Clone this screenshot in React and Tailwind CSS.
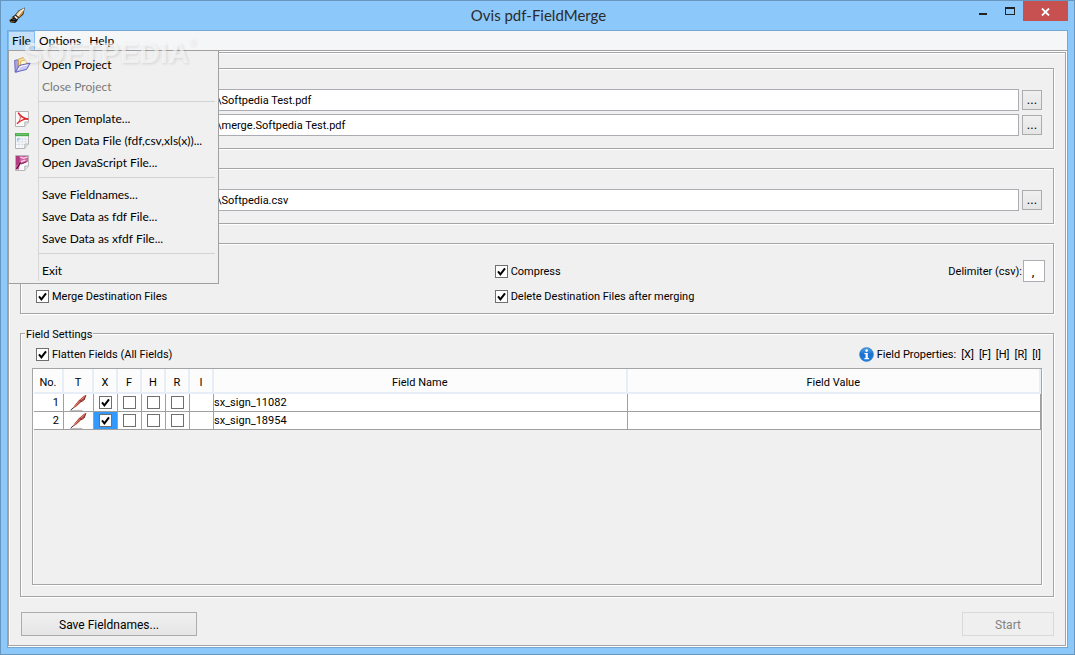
import React from "react";

const ETCHED =
  "border border-[#a5a5a7] shadow-[1px_1px_0_#fff,inset_1px_1px_0_#fff]";

function PenNibIcon() {
  return (
    <svg width="17" height="17" viewBox="0 0 17 17" aria-hidden="true">
      <path d="M16 0.5 L9.5 3.5 L6 8 L10 11.4 L14.4 7.5 Z" fill="#3a2a1c" />
      <path d="M15.6 1 L10 4 L6.8 8 L9 9.8 Z" fill="#f0d3a2" />
      <path d="M15.6 1 L9 9.8 L10 10.8 L13.8 6.8 Z" fill="#c98d40" />
      <path d="M15 1.8 L9 8.6" stroke="#fff6e2" strokeWidth="1.1" />
      <path d="M6.8 7.6 L3.6 9.6 L1.6 12.4 L5.4 12.2 L7.4 15 L9.8 11 Z" fill="#16120f" />
      <path d="M6.2 8.6 L9 11 L7.8 12.2 L5.2 10 Z" fill="#f6f0e2" />
      <path d="M0.8 12.6 C2 11.6 3.4 12 4.6 12.4 C7 12.6 8 14.4 6.8 15.4 C5 16.6 2 16 1.2 15 C0.6 14.2 0.4 13.2 0.8 12.6 Z" fill="#0f0d0c" />
      <path d="M1.6 14.2 C2.6 15.2 4.2 15.2 5.4 14.6" stroke="#c99a52" strokeWidth="0.9" fill="none" />
      <path d="M1.2 12.2 L4.4 10.4" stroke="#d9b16e" strokeWidth="0.8" />
    </svg>
  );
}

function FolderIcon() {
  return (
    <svg width="17" height="16" viewBox="0 0 17 16" aria-hidden="true">
      <path d="M0.6 3.5 L3.2 2.8 L4.6 4 L4 14.6 L1.2 15 Z" fill="#a8a4e6" stroke="#5c58b8" strokeWidth="0.8" />
      <path d="M4.4 2.2 L9 0.6 L11.4 2.4 L11.6 8.6 L4.6 10.4 Z" fill="#f9e39b" stroke="#c99b3e" strokeWidth="0.8" />
      <path d="M6.6 4.4 L11 3 L12.8 4.6 L12.8 8.8 L6.6 10 Z" fill="#fff7d6" stroke="#d2a94e" strokeWidth="0.8" />
      <path d="M1.4 15.2 L5.4 8.4 L16.2 6 L12.6 12.4 Z" fill="#c9c9f7" stroke="#5c58b8" strokeWidth="0.9" />
      <path d="M4 12.8 L6.2 9.6 L13.6 8" stroke="#fff" strokeWidth="0.9" fill="none" />
    </svg>
  );
}

function PageShape() {
  return (
    <>
      <path d="M1.5 0.5 H14.5 V11 L10.8 15.5 H1.5 Z" fill="#fbfbfb" stroke="#b4b4b4" />
      <path d="M14.5 11 H10.8 V15.5" fill="#e4e4e4" stroke="#b4b4b4" />
    </>
  );
}

function PdfIcon() {
  return (
    <svg width="16" height="16" viewBox="0 0 16 16" aria-hidden="true">
      <PageShape />
      <path d="M4.2 1.6 C5.6 4.6 9 7 14.2 8.4" fill="none" stroke="#dd2229" strokeWidth="1.5" />
      <path d="M14.2 7.6 C9.6 8 5.8 9.8 3 12.8" fill="none" stroke="#dd2229" strokeWidth="1.3" />
      <path d="M5.6 3.6 C7 6.6 6.2 9.4 3.4 12.4" fill="none" stroke="#e5484d" strokeWidth="1" />
    </svg>
  );
}

function SheetIcon() {
  return (
    <svg width="16" height="16" viewBox="0 0 16 16" aria-hidden="true">
      <PageShape />
      <rect x="1" y="0" width="14" height="3.2" fill="#4aab4a" />
      <path d="M2 1.2 H14" stroke="#8fd48b" strokeWidth="0.8" />
      <path d="M2 6.2 H14 M2 8.8 H14 M2 11.4 H10.5 M5 4 V15 M8.2 4 V15 M11.4 4 V10.5" stroke="#d3dbe6" strokeWidth="0.7" />
      <path d="M3 5 H7 L3 9 Z" fill="#9fd0f2" />
    </svg>
  );
}

function ScriptIcon() {
  return (
    <svg width="16" height="16" viewBox="0 0 16 16" aria-hidden="true">
      <PageShape />
      <path d="M2 1 H14 V6.6 C12 8 10.6 8.2 9.4 8.4 L5.6 9.6 L5 14.6 H2 Z" fill="#cf62a0" />
      <path d="M2 1 H5.4 L6 5 L4.6 9 L2 10.4 Z" fill="#b23a80" />
      <path d="M6.4 2 L9.4 3.4 L13.6 2 M7 6.6 L11.6 5" stroke="#fbdcee" strokeWidth="1.3" fill="none" />
      <path d="M2.4 14 L5 10.2 L6.4 7.4" stroke="#5d103c" strokeWidth="1.3" fill="none" />
      <path d="M7 9 L12.6 6.8" stroke="#7d1c54" strokeWidth="0.9" />
    </svg>
  );
}

function InfoIcon() {
  return (
    <svg width="15" height="15" viewBox="0 0 15 15" aria-hidden="true">
      <defs>
        <linearGradient id="info" x1="0" y1="0" x2="0" y2="1">
          <stop offset="0" stopColor="#4fa5ea" />
          <stop offset="0.5" stopColor="#1a6fd0" />
          <stop offset="1" stopColor="#1c87e4" />
        </linearGradient>
      </defs>
      <circle cx="7.5" cy="7.5" r="6.9" fill="url(#info)" stroke="#2a6fbb" strokeWidth="0.6" />
      <circle cx="7.6" cy="3.6" r="1.3" fill="#fff" />
      <path d="M5.4 6 H8.8 V11 H10 V12.2 H5.4 V11 H6.6 V7.2 H5.4 Z" fill="#fff" />
    </svg>
  );
}

function SignatureIcon() {
  return (
    <svg width="17" height="16" viewBox="0 0 17 16" className="mx-auto block" aria-label="Signature">
      <path d="M16.4 0 L14 0.8 L8.6 5.4 L4.4 10.4 L2.4 14 L6.4 11.6 L10.6 7.6 L13.6 6 L15.2 2.6 Z" fill="#b5483d" />
      <path d="M15.6 0.8 L9 6.6 L3.8 12.6" stroke="#dd8a76" strokeWidth="0.9" fill="none" />
      <path d="M15.8 0.4 L14.2 5 M9.4 5.4 L12 6.6" stroke="#6f2a26" strokeWidth="0.9" />
      <path d="M3.4 12.6 L0.6 15.2" stroke="#3b2a28" strokeWidth="1" />
      <path d="M0.6 15.4 H12.4" stroke="#a8a29e" strokeWidth="0.8" />
    </svg>
  );
}

function Tick({ label, defaultChecked = false }) {
  return (
    <span className="relative inline-block size-[13px] shrink-0">
      <input
        type="checkbox"
        aria-label={label}
        defaultChecked={defaultChecked}
        className="peer block size-[13px] appearance-none border border-[#6f6f6f] bg-white"
      />
      <svg
        viewBox="0 0 13 13"
        className="pointer-events-none absolute inset-0 hidden size-[13px] peer-checked:block"
        aria-hidden="true"
      >
        <path d="M3 6.4 L5.4 9.4 L10 3.4" fill="none" stroke="#000" strokeWidth="2" />
      </svg>
    </span>
  );
}

function Check({ children }) {
  return (
    <label className="flex items-center gap-[3px] whitespace-nowrap">
      <Tick defaultChecked />
      <span className="pt-[2px] leading-[14px]">{children}</span>
    </label>
  );
}

function FileRow({ label, value }) {
  return (
    <div className="flex items-center gap-[3px]">
      <input
        type="text"
        aria-label={label}
        defaultValue={value}
        className="h-[22px] min-w-0 flex-1 border border-[#abadb3] bg-white"
      />
      <button
        type="button"
        aria-label={"Browse " + label}
        className="flex size-5 items-center justify-center border border-[#acacac] bg-linear-to-b from-[#f0f0f0] to-[#e5e5e5] text-[13px] leading-4"
      >
        ...
      </button>
    </div>
  );
}

const menuGroups = [
  [
    { text: "Open Project", icon: <FolderIcon /> },
    { text: "Close Project", disabled: true },
  ],
  [
    { text: "Open Template...", icon: <PdfIcon /> },
    { text: "Open Data File (fdf,csv,xls(x))...", icon: <SheetIcon /> },
    { text: "Open JavaScript File...", icon: <ScriptIcon /> },
  ],
  [
    { text: "Save Fieldnames..." },
    { text: "Save Data as fdf File..." },
    { text: "Save Data as xfdf File..." },
  ],
  [{ text: "Exit" }],
];

function FileMenu() {
  return (
    <div
      role="menu"
      aria-label="File"
      className="absolute top-[19px] left-0 z-10 w-[211px] border border-[#a0a0a0] bg-[#f0f0f0] pt-[3px] pb-px"
    >
      <div className="absolute top-[2px] bottom-[2px] left-[29px] w-px bg-[#d7d7d7]" />
      {menuGroups.map((group, i) => (
        <div key={group[0].text} role="group">
          {i > 0 && (
            <div className="h-[10px] pt-[3px] pr-[3px] pl-[30px]">
              <div className="h-px bg-[#d2d2d2]" />
            </div>
          )}
          {group.map((item) => (
            <button
              key={item.text}
              type="button"
              role="menuitem"
              disabled={item.disabled}
              className="flex h-[22px] w-full items-center pl-[5px] text-left whitespace-nowrap disabled:text-[#7a7a7a]"
            >
              <span className="w-7 shrink-0">{item.icon}</span>
              {item.text}
            </button>
          ))}
        </div>
      ))}
    </div>
  );
}

const flags = ["X", "F", "H", "R"];
const fields = [
  { no: 1, name: "sx_sign_11082" },
  { no: 2, name: "sx_sign_18954", selected: true },
];
const headers = ["No.", "T", "X", "F", "H", "R", "I", "Field Name", "Field Value"];

function FieldTable() {
  const cell = "h-[18px] border-r border-b border-[#a0a0a0] bg-white p-0";
  return (
    <table className="w-full table-fixed border-separate border-spacing-0 leading-4">
      <colgroup>
        <col className="w-[30px]" />
        <col className="w-[30px]" />
        <col className="w-6" />
        <col className="w-6" />
        <col className="w-6" />
        <col className="w-6" />
        <col className="w-6" />
        <col />
        <col />
      </colgroup>
      <thead>
        <tr>
          {headers.map((h) => (
            <th
              key={h}
              scope="col"
              className="h-[25px] border-r-2 border-b-2 border-[#e8eef8] bg-[#fcfcfc] p-0 pt-1 text-center font-normal"
            >
              {h}
            </th>
          ))}
        </tr>
      </thead>
      <tbody>
        {fields.map((f) => (
          <tr key={f.no}>
            <td className={cell + " pr-1 text-right"}>{f.no}</td>
            <td className={cell}>
              <SignatureIcon />
            </td>
            {flags.map((flag) => (
              <td
                key={flag}
                className={
                  f.selected && flag === "X"
                    ? "h-[18px] border-r border-b border-[#a0a0a0] bg-[#3399ff] p-0"
                    : cell
                }
              >
                <span className="flex justify-center">
                  <Tick label={flag + " " + f.name} defaultChecked={flag === "X"} />
                </span>
              </td>
            ))}
            <td className={cell} />
            <td className={cell}>{f.name}</td>
            <td className={cell} />
          </tr>
        ))}
      </tbody>
    </table>
  );
}

export default function App() {
  return (
    <div className="flex min-h-screen flex-col border border-[#6796be] bg-[#8dc8fa] px-[6px] pb-[6px] font-['Roboto',sans-serif] text-[11px] leading-4 text-black">
      <header className="grid h-[29px] shrink-0 grid-cols-[1fr_auto_1fr] pl-[2px]">
        <div className="pt-[6px]">
          <PenNibIcon />
        </div>
        <h1 className="font-['Lato',sans-serif] text-[15px] leading-[29px] text-[#2b2b2b]">
          Ovis pdf-FieldMerge
        </h1>
        <div className="flex items-start justify-end">
          <button type="button" aria-label="Minimize" className="flex h-5 w-[26px] justify-center pt-3">
            <span className="h-[2px] w-2 bg-[#222]" />
          </button>
          <button type="button" aria-label="Maximize" className="flex h-5 w-[27px] justify-center pt-[6px]">
            <span className="h-2 w-[10px] border border-t-2 border-[#222]" />
          </button>
          <button type="button" aria-label="Close" className="flex h-5 w-[45px] items-center justify-center bg-[#c75050]">
            <svg width="9" height="8" viewBox="0 0 9 8" className="mt-[2px]" aria-hidden="true">
              <path d="M1 0.5 L8 7.5 M8 0.5 L1 7.5" stroke="#fff" strokeWidth="1.8" />
            </svg>
          </button>
        </div>
      </header>

      <div className="flex flex-1 flex-col border border-[#76a8d4] bg-white">
        <nav className="relative flex h-5 shrink-0 border-b border-[#a0a0a0] bg-[#f5f6f7] font-['Lato',sans-serif] text-xs">
          <button type="button" aria-expanded="true" className="w-[27px] border border-b-0 border-[#84bbf0] bg-[#c3dffa]">
            File
          </button>
          <button type="button" className="px-1">
            Options
          </button>
          <button type="button" className="px-1">
            Help
          </button>
          <FileMenu />
          <div
            aria-hidden="true"
            className="pointer-events-none absolute top-[6px] left-[15px] z-20 flex font-['Liberation_Sans',sans-serif] text-[29px] leading-8 font-bold text-white/60 [text-shadow:1px_1px_3px_rgba(0,0,0,0.12)]"
          >
            SOFTPEDIA<span className="text-[10px] leading-3">®</span>
          </div>
        </nav>

        <main className={"mt-px mr-px mb-px flex flex-1 flex-col bg-[#f0f0f0] px-[11px] pt-[15px] pb-[9px] " + ETCHED}>
          <section className={"mb-[19px] flex flex-col gap-[3px] pt-5 pr-[11px] pb-3 pl-[195px] " + ETCHED}>
            <FileRow label="template file" value="\Softpedia Test.pdf" />
            <FileRow label="destination file" value="\merge.Softpedia Test.pdf" />
          </section>

          <section className={"mb-[19px] pt-5 pr-[11px] pb-3 pl-[195px] " + ETCHED}>
            <FileRow label="data file" value="\Softpedia.csv" />
          </section>

          <section className={"mb-[19px] grid grid-cols-[5fr_6fr] gap-y-[3px] pt-4 pr-2 pb-[6px] pl-[15px] " + ETCHED}>
            <div className="col-start-2 flex h-[22px] items-center justify-between">
              <Check>Compress</Check>
              <label className="flex items-center gap-px">
                <span className="pt-[2px] leading-[14px]">Delimiter (csv):</span>
                <input
                  type="text"
                  defaultValue=","
                  className="size-[22px] border border-[#abadb3] bg-white pr-[2px] text-center text-[13px]"
                />
              </label>
            </div>
            <div className="flex h-[22px] items-center">
              <Check>Merge Destination Files</Check>
            </div>
            <div className="flex h-[22px] items-center">
              <Check>Delete Destination Files after merging</Check>
            </div>
          </section>

          <section className={"relative flex flex-1 flex-col px-[11px] pt-3 pb-[11px] " + ETCHED}>
            <h2 className="absolute -top-2 left-1 bg-[#f0f0f0] px-px pt-px leading-[15px]">Field Settings</h2>
            <div className="flex h-[22px] items-start justify-between pr-px pl-1">
              <Check>Flatten Fields (All Fields)</Check>
              <div className="flex items-center gap-[3px]">
                <InfoIcon />
                <span className="flex gap-[5px] pt-[2px] leading-[14px]">
                  <span>Field Properties:</span>
                  <span>[X]</span>
                  <span>[F]</span>
                  <span>[H]</span>
                  <span>[R]</span>
                  <span>[I]</span>
                </span>
              </div>
            </div>
            <div className={"flex-1 pl-px " + ETCHED}>
              <FieldTable />
            </div>
          </section>

          <footer className="mt-[15px] flex justify-between pl-px text-xs">
            <button
              type="button"
              className="h-6 w-44 border border-[#acacac] bg-linear-to-b from-[#f0f0f0] to-[#e5e5e5] pt-px"
            >
              Save Fieldnames...
            </button>
            <button type="button" disabled className="h-6 w-[92px] border border-[#d9d9d9] bg-[#efefef] pt-px text-[#838383]">
              Start
            </button>
          </footer>
        </main>
      </div>
    </div>
  );
}
